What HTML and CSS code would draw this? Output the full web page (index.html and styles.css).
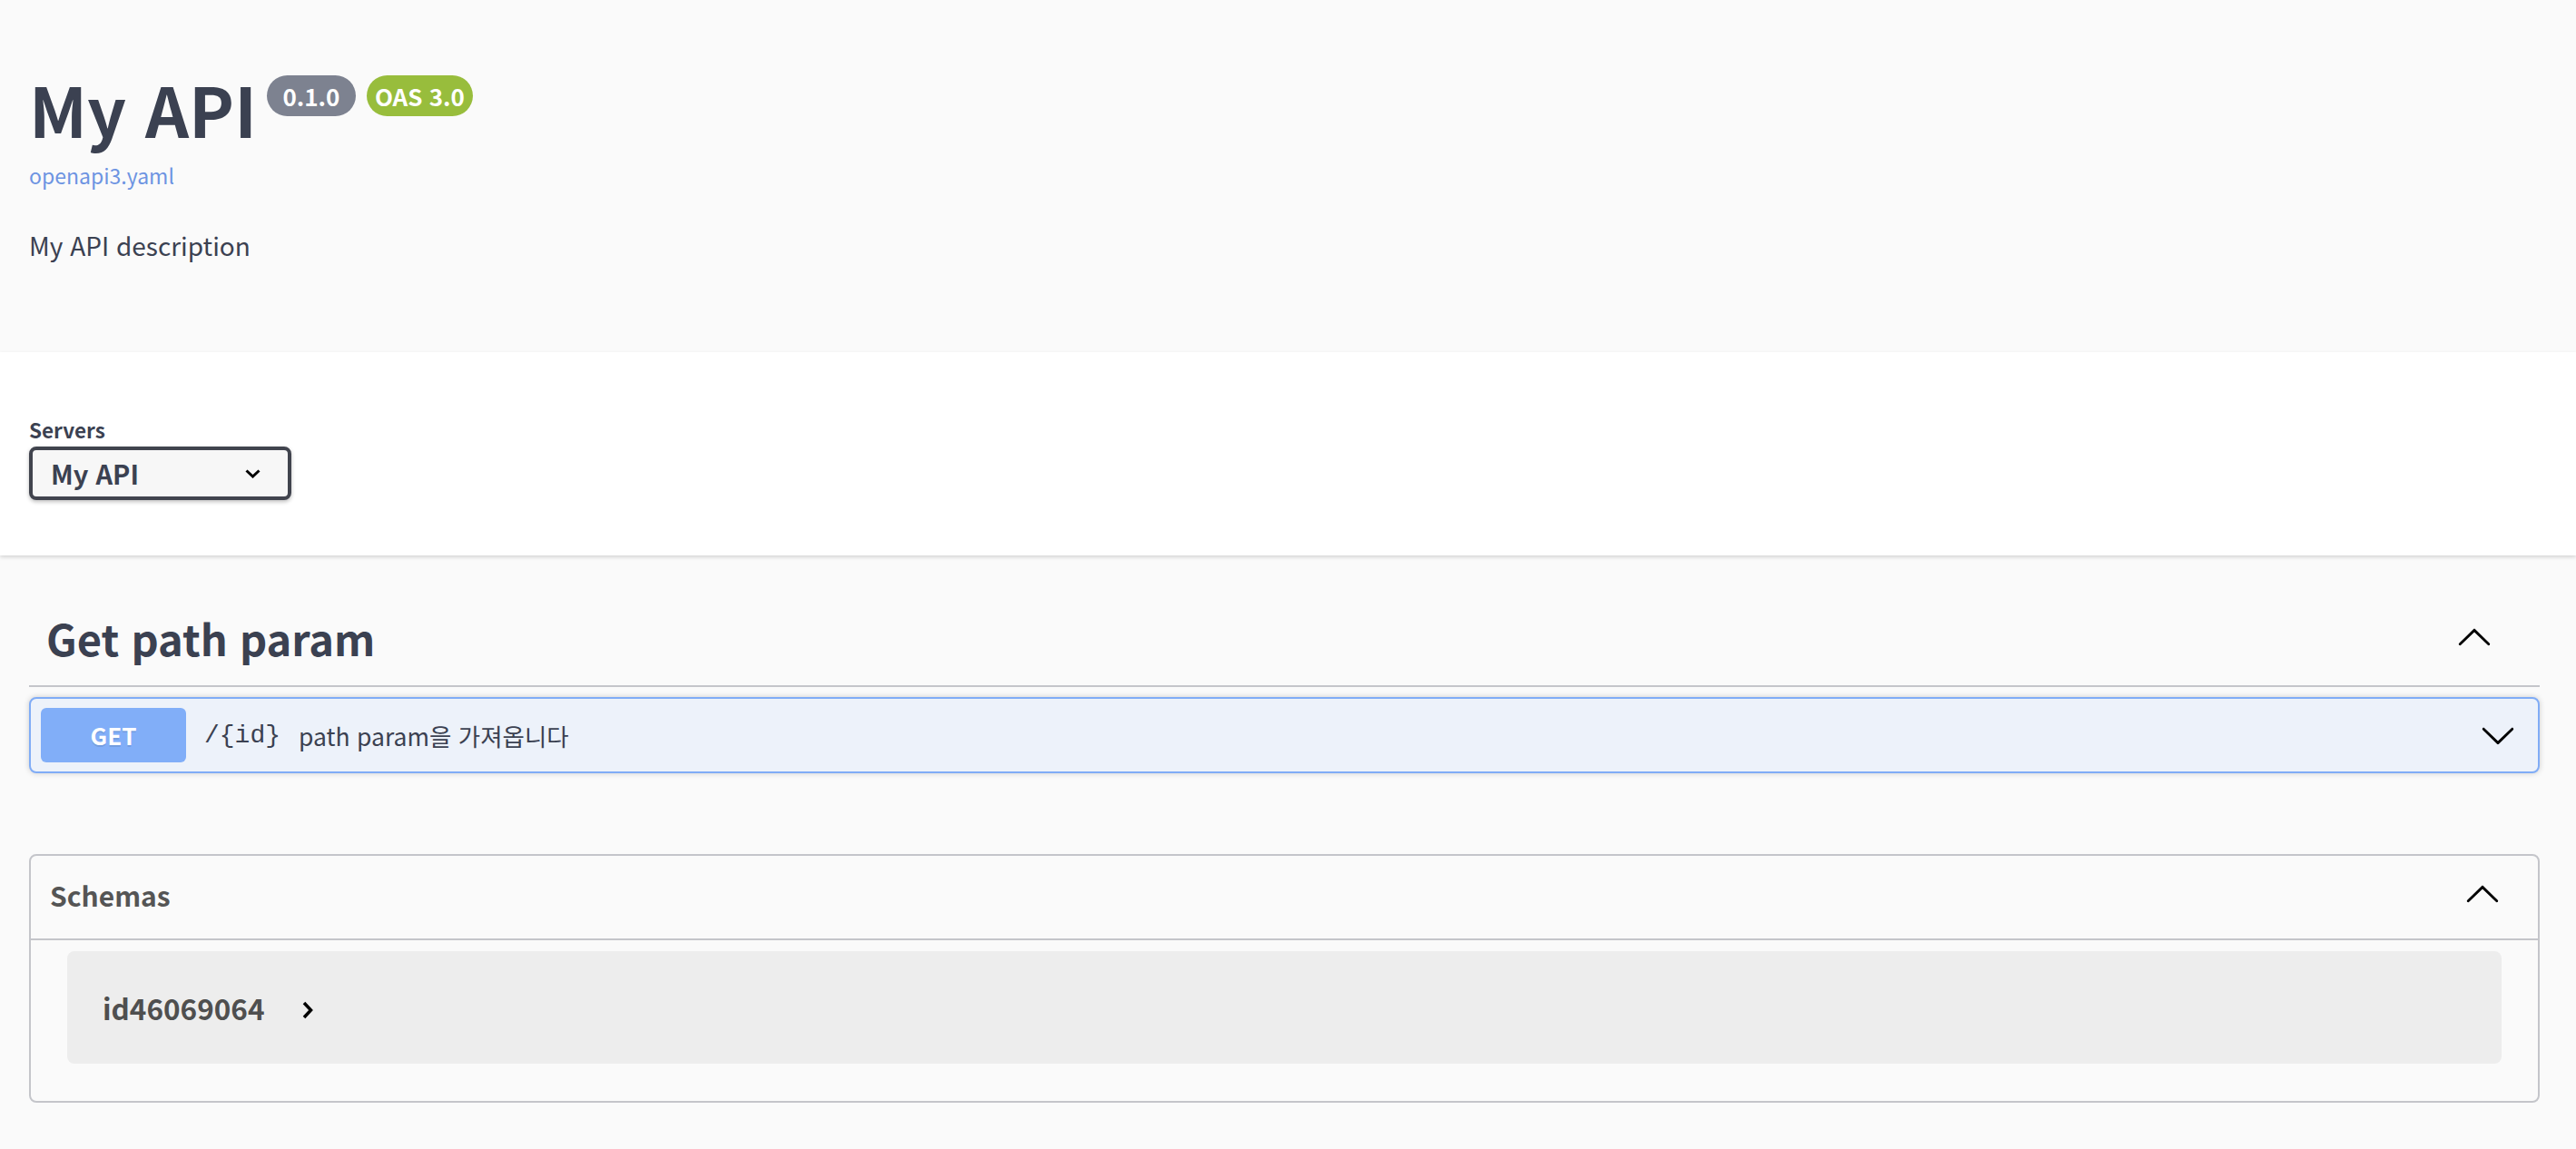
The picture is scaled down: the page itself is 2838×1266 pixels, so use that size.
FILE: index.html
```html
<!DOCTYPE html>
<html lang="ko">
<head>
<meta charset="utf-8">
<title>My API</title>
<link rel="stylesheet" href="styles.css">
</head>
<body>
<div class="info-section">
  <div class="title-row">
    <h1 class="title">My API</h1>
    <span class="badge badge-version">0.1.0</span>
    <span class="badge badge-oas">OAS 3.0</span>
  </div>
  <a class="spec-link" href="#">openapi3.yaml</a>
  <p class="desc">My API description</p>
</div>

<div class="scheme-section">
  <div class="servers-label">Servers</div>
  <div class="select">
    <span class="select-text">My API</span>
    <svg class="select-arrow" width="17" height="10" viewBox="0 0 17 10"><polyline points="1.5,1.5 8.5,8 15.5,1.5" fill="none" stroke="#000" stroke-width="3"/></svg>
  </div>
</div>

<div class="main">
  <div class="tag-heading">
    <span class="tag-name">Get path param</span>
    <svg class="arrow arrow-up" width="40" height="40" viewBox="0 0 20 20"><path d="M17.418 6.109c.272-.268.709-.268.979 0s.271.701 0 .969l-7.908 7.83c-.27.268-.707.268-.979 0l-7.908-7.83c-.27-.268-.27-.701 0-.969.271-.268.709-.268.979 0L10 13.25l7.418-7.141z"/></svg>
  </div>
  <div class="opblock">
    <span class="method">GET</span>
    <span class="path">/{id}</span>
    <span class="summary">path param을 가져옵니다</span>
    <svg class="arrow row-arrow" width="40" height="40" viewBox="0 0 20 20"><path d="M17.418 6.109c.272-.268.709-.268.979 0s.271.701 0 .969l-7.908 7.83c-.27.268-.707.268-.979 0l-7.908-7.83c-.27-.268-.27-.701 0-.969.271-.268.709-.268.979 0L10 13.25l7.418-7.141z"/></svg>
  </div>

  <div class="models">
    <div class="models-head">
      <span class="models-title">Schemas</span>
      <svg class="arrow arrow-up" width="40" height="40" viewBox="0 0 20 20"><path d="M17.418 6.109c.272-.268.709-.268.979 0s.271.701 0 .969l-7.908 7.83c-.27.268-.707.268-.979 0l-7.908-7.83c-.27-.268-.27-.701 0-.969.271-.268.709-.268.979 0L10 13.25l7.418-7.141z"/></svg>
    </div>
    <div class="models-body">
      <div class="model-box">
        <span class="model-title">id46069064</span>
        <svg class="model-arrow" width="12" height="20" viewBox="0 0 12 20"><polyline points="2,2 9.5,10 2,18" fill="none" stroke="#000" stroke-width="3.5"/></svg>
      </div>
    </div>
  </div>
</div>
</body>
</html>
```

FILE: styles.css
```css
html, body {
  margin: 0;
  padding: 0;
}
body {
  background: #fafafa;
  font-family: "Noto Sans CJK KR", "Noto Sans", sans-serif;
  color: #3b4151;
}

.info-section {
  box-sizing: border-box;
  height: 388px;
  padding: 75px 40px 0 32px;
  background: #fafafa;
}
.title-row {
  display: flex;
  align-items: flex-start;
}
.title {
  margin: 0;
  font-size: 75px;
  line-height: 90px;
  font-weight: 700;
  color: #3b4151;
}
.badge {
  margin-top: 8px;
  height: 45px;
  box-sizing: border-box;
  border-radius: 23px;
  color: #fff;
  font-size: 26px;
  font-weight: 700;
  line-height: 45px;
  text-align: center;
}
.badge-version {
  width: 98px;
  margin-left: 11px;
  background: #7d8290;
}
.badge-oas {
  margin-left: 12px;
  padding: 0 9px;
  background: #98bd3c;
}
.spec-link {
  display: block;
  margin-top: 13px;
  font-size: 23px;
  line-height: 30px;
  color: #6d94e2;
  text-decoration: none;
}
.desc {
  margin: 42px 0 0;
  font-size: 28px;
  line-height: 40px;
  color: #3b4151;
}

.scheme-section {
  box-sizing: border-box;
  height: 224px;
  padding: 70px 40px 0 32px;
  background: #fff;
  box-shadow: 0 2px 4px 0 rgba(0, 0, 0, 0.15);
  position: relative;
}
.servers-label {
  font-size: 22.5px;
  line-height: 30px;
  font-weight: 700;
  color: #3b4151;
}
.select {
  margin-top: 4px;
  box-sizing: border-box;
  width: 289px;
  height: 59px;
  border: 4px solid #41444e;
  border-radius: 8px;
  background: #f7f7f7;
  box-shadow: 0 2px 4px 0 rgba(0, 0, 0, 0.25);
  display: flex;
  align-items: center;
  padding: 0 30px 0 20px;
}
.select-text {
  flex: 1;
  font-size: 29px;
  line-height: 51px;
  font-weight: 700;
  color: #3b4151;
}

.main {
  padding: 61px 40px 40px 32px;
}
.tag-heading {
  display: flex;
  align-items: center;
  padding: 0 52px 22px 19px;
  border-bottom: 2px solid #c4c5ca;
}
.tag-name {
  flex: 1;
  font-size: 47px;
  line-height: 60px;
  font-weight: 700;
  color: #3b4151;
}
.arrow {
  display: block;
}
.arrow-up {
  transform: rotate(180deg);
}

.opblock {
  margin-top: 11px;
  box-sizing: border-box;
  height: 84px;
  display: flex;
  align-items: center;
  padding: 0 24px 0 11px;
  border: 2px solid #80acf6;
  border-radius: 8px;
  background: #edf2fa;
  box-shadow: 0 0 6px rgba(0, 0, 0, 0.19);
}
.method {
  width: 160px;
  height: 60px;
  border-radius: 6px;
  background: #81aef8;
  color: #fff;
  font-size: 26px;
  font-weight: 700;
  line-height: 60px;
  text-align: center;
  text-shadow: 0 2px 0 rgba(0, 0, 0, 0.1);
}
.path {
  margin-left: 20px;
  font-family: "Liberation Mono", "DejaVu Sans Mono", monospace;
  font-size: 28px;
  color: #3b4151;
}
.summary {
  flex: 1;
  margin-left: 20px;
  font-size: 26.5px;
  color: #3b4151;
}

.models {
  margin-top: 89px;
  border: 2px solid #c4c5ca;
  border-radius: 8px;
}
.models-head {
  box-sizing: border-box;
  height: 93px;
  display: flex;
  align-items: center;
  padding: 0 41px 6px 21px;
  border-bottom: 2px solid #c4c5ca;
}
.models-title {
  flex: 1;
  font-size: 30px;
  font-weight: 700;
  color: #555;
}
.models-body {
  padding: 12px 40px 41px;
}
.model-box {
  box-sizing: border-box;
  height: 124px;
  display: flex;
  align-items: center;
  padding: 0 0 0 39px;
  border-radius: 8px;
  background: #ededed;
}
.model-title {
  font-size: 31.5px;
  font-weight: 700;
  color: #4f4f4f;
}
.model-arrow {
  margin-left: 41px;
  margin-top: 6px;
}
```
